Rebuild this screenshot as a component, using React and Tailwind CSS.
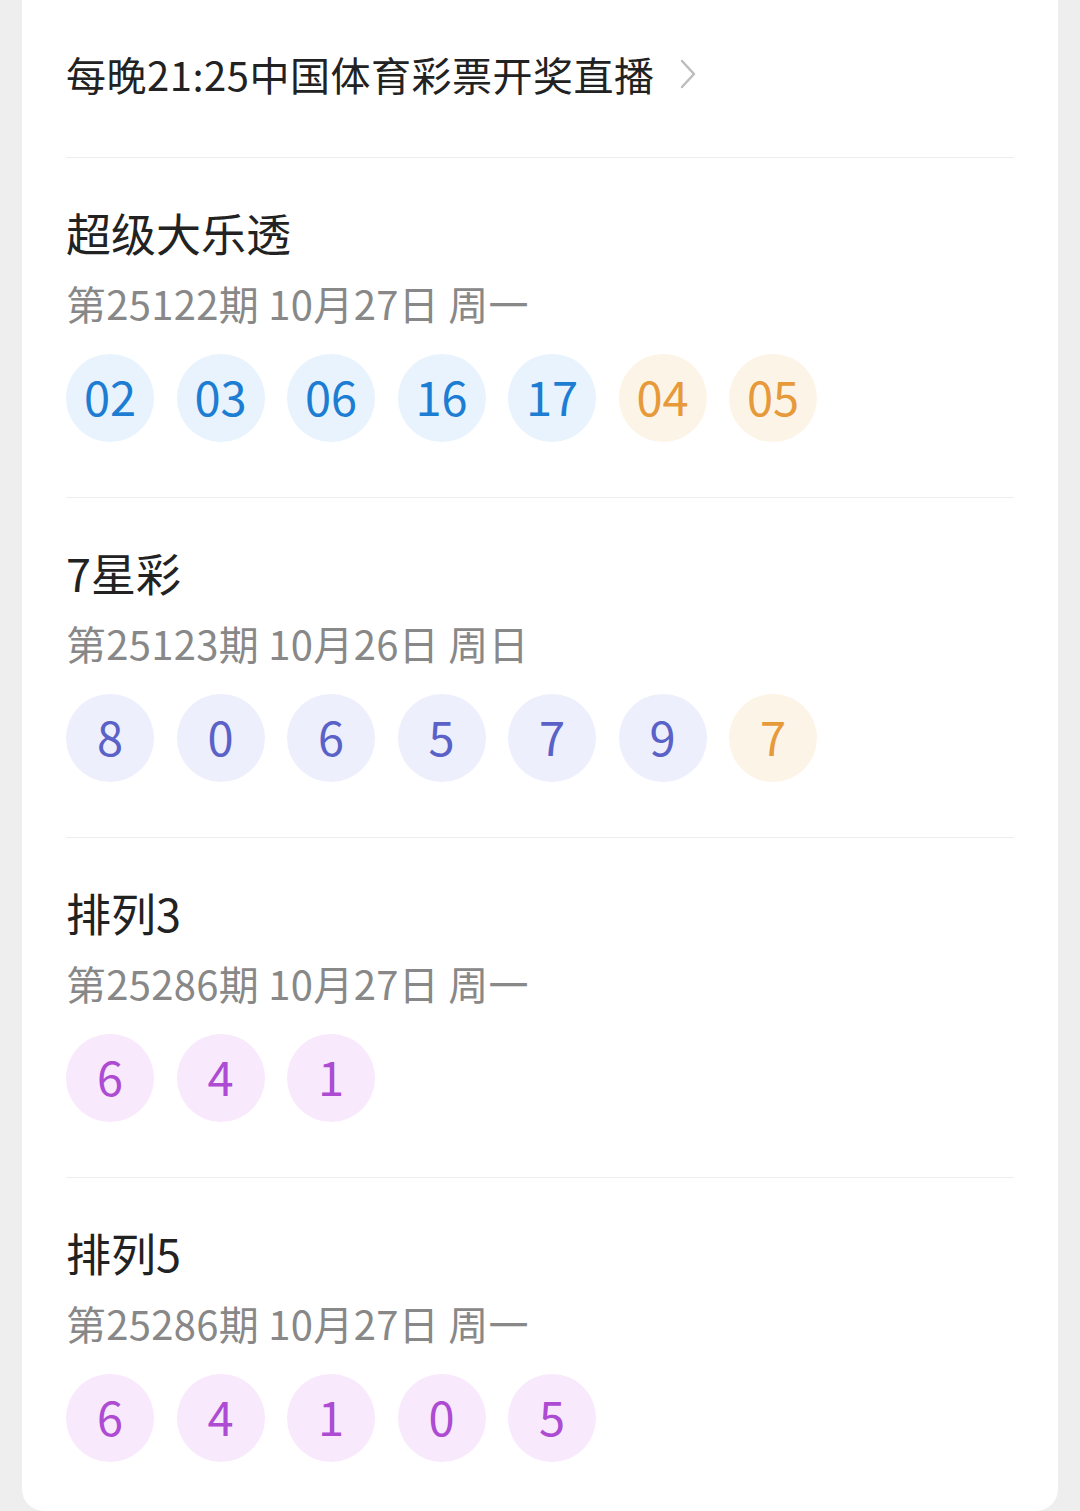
import React from "react";

const font = { fontFamily: '"Noto Sans CJK SC", "Noto Sans", sans-serif' };

const tones = {
  blue: "bg-[#e8f3fd] text-[#1c7dd3]",
  orange: "bg-[#fdf4e8] text-[#e69a3a]",
  indigo: "bg-[#eeeffc] text-[#5a62c8]",
  purple: "bg-[#f8e9fc] text-[#ad4bd3]",
};

const games = [
  {
    name: "超级大乐透",
    info: "第25122期 10月27日 周一",
    balls: [
      ["02", "blue"],
      ["03", "blue"],
      ["06", "blue"],
      ["16", "blue"],
      ["17", "blue"],
      ["04", "orange"],
      ["05", "orange"],
    ],
  },
  {
    name: "7星彩",
    info: "第25123期 10月26日 周日",
    balls: [
      ["8", "indigo"],
      ["0", "indigo"],
      ["6", "indigo"],
      ["5", "indigo"],
      ["7", "indigo"],
      ["9", "indigo"],
      ["7", "orange"],
    ],
  },
  {
    name: "排列3",
    info: "第25286期 10月27日 周一",
    balls: [
      ["6", "purple"],
      ["4", "purple"],
      ["1", "purple"],
    ],
  },
  {
    name: "排列5",
    info: "第25286期 10月27日 周一",
    balls: [
      ["6", "purple"],
      ["4", "purple"],
      ["1", "purple"],
      ["0", "purple"],
      ["5", "purple"],
    ],
  },
];

const Ball = ({ value, tone }) => (
  <div
    className={`w-[88px] h-[88px] rounded-full flex items-center justify-center pb-[6px] text-[47px] leading-none ${tones[tone]}`}
  >
    {value}
  </div>
);

const GameSection = ({ game, last }) => (
  <section
    className={`pt-[47px] ${last ? "pb-[50px]" : "pb-[55px] border-b border-[#ededed]"}`}
  >
    <h2 className="text-[45px] leading-[56px] text-[#222]">{game.name}</h2>
    <p className="mt-[17px] text-[40px] leading-[50px] tracking-[0.3px] text-[#888]">
      {game.info}
    </p>
    <div className="mt-[26px] flex gap-[22.5px]">
      {game.balls.map(([v, t], i) => (
        <Ball key={i} value={v} tone={t} />
      ))}
    </div>
  </section>
);

export default function App() {
  return (
    <div className="min-h-[1511px] bg-[#eeeeee] px-[22px]" style={font}>
      <div className="bg-white rounded-b-[22px] px-[44px] h-[1511px]">
        {/* Header link */}
        <div className="pt-[49px] pb-[58px] border-b border-[#ededed] flex items-center">
          <span className="text-[40px] leading-[50px] tracking-[0.5px] text-[#222]">
            每晚21:25中国体育彩票开奖直播
          </span>
          <svg
            className="ml-[26px]"
            width="16"
            height="32"
            viewBox="0 0 16 32"
            fill="none"
          >
            <path
              d="M2 3 L14 16 L2 29"
              stroke="#bdbdbd"
              strokeWidth="2.5"
              strokeLinecap="round"
              strokeLinejoin="round"
            />
          </svg>
        </div>

        {games.map((g, i) => (
          <GameSection key={g.name} game={g} last={i === games.length - 1} />
        ))}
      </div>
    </div>
  );
}
